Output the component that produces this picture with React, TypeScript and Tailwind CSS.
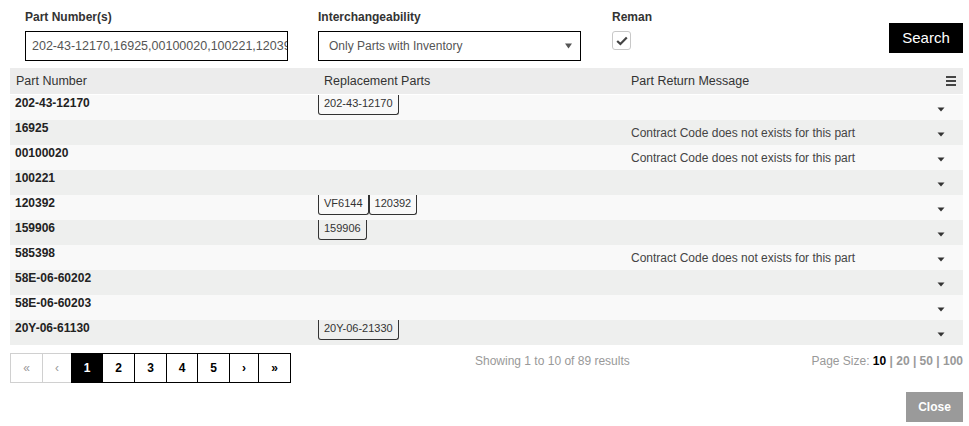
import React from "react";

type Row = { pn: string; reps: string[]; msg: string };

const MSG = "Contract Code does not exists for this part";

const rows: Row[] = [
  { pn: "202-43-12170", reps: ["202-43-12170"], msg: "" },
  { pn: "16925", reps: [], msg: MSG },
  { pn: "00100020", reps: [], msg: MSG },
  { pn: "100221", reps: [], msg: "" },
  { pn: "120392", reps: ["VF6144", "120392"], msg: "" },
  { pn: "159906", reps: ["159906"], msg: "" },
  { pn: "585398", reps: [], msg: MSG },
  { pn: "58E-06-60202", reps: [], msg: "" },
  { pn: "58E-06-60203", reps: [], msg: "" },
  { pn: "20Y-06-61130", reps: ["20Y-06-21330"], msg: "" },
];

function Caret() {
  return (
    <svg width="8" height="5" viewBox="0 0 8 5" className="block">
      <path d="M0.5 0.5 L7.5 0.5 L4 4.5 Z" fill="#333" />
    </svg>
  );
}

function PageBtn({
  label,
  w,
  active,
  disabled,
}: {
  label: string;
  w: string;
  active?: boolean;
  disabled?: boolean;
}) {
  const base =
    "h-[30px] flex items-center justify-center -ml-px first:ml-0 border text-[12px] leading-none";
  if (active)
    return (
      <div className={`${base} ${w} bg-black border-black text-white font-bold relative`}>
        {label}
      </div>
    );
  if (disabled)
    return (
      <div className={`${base} ${w} bg-white border-[#d0d0d0] text-[#999]`}>{label}</div>
    );
  return (
    <div className={`${base} ${w} bg-white border-black text-black font-bold`}>{label}</div>
  );
}

export default function App() {
  return (
    <div
      className="w-[969px] h-[426px] bg-white overflow-hidden text-[#333]"
      style={{ fontFamily: '"Liberation Sans", Arial, sans-serif' }}
    >
      <div className="ml-[10px] w-[953px]">
        {/* Top form */}
        <div className="flex h-[68px]">
          <div className="ml-[15px] w-[263px] pt-[10px]">
            <div className="text-[12px] font-bold leading-[14px] text-[#333]">Part Number(s)</div>
            <div className="mt-[7px] h-[30px] border border-black flex items-center pl-[6px] overflow-hidden whitespace-nowrap text-[12.5px] text-[#555]">
              <span className="block w-[256px] overflow-hidden">202-43-12170,16925,00100020,100221,120392</span>
            </div>
          </div>
          <div className="ml-[30px] w-[263px] pt-[10px]">
            <div className="text-[12px] font-bold leading-[14px] text-[#333]">Interchangeability</div>
            <div className="mt-[7px] h-[30px] border border-black flex items-center justify-between pl-[10px] pr-[8px] text-[12px] text-[#555]">
              <span>Only Parts with Inventory</span>
              <svg width="7" height="6" viewBox="0 0 7 6">
                <path d="M0 0.5 L7 0.5 L3.5 5.5 Z" fill="#555" />
              </svg>
            </div>
          </div>
          <div className="ml-[31px] pt-[10px]">
            <div className="text-[12px] font-bold leading-[14px] text-[#333]">Reman</div>
            <div className="mt-[7px] w-[19px] h-[19px] border border-[#c8c8c8] rounded-[3px] flex items-center justify-center bg-white">
              <svg width="12" height="10" viewBox="0 0 12 10">
                <path d="M1.2 5 L4.4 8 L10.8 1.5" fill="none" stroke="#444" strokeWidth="2.2" />
              </svg>
            </div>
          </div>
          <div className="ml-auto pt-[23px]">
            <div className="w-[74px] h-[30px] bg-black text-white text-[15px] flex items-center justify-center pt-px">
              Search
            </div>
          </div>
        </div>

        {/* Table header */}
        <div className="grid grid-cols-[308px_307px_1fr_40px] h-[26px] bg-[#ececec] items-center text-[12.5px] text-[#333]">
          <div className="pl-[6px]">Part Number</div>
          <div className="pl-[6px]">Replacement Parts</div>
          <div className="pl-[6px]">Part Return Message</div>
          <div className="flex justify-end pr-[7px]">
            <div className="flex flex-col gap-[2px] w-[10px]">
              <div className="h-[2px] bg-[#444]" />
              <div className="h-[2px] bg-[#444]" />
              <div className="h-[2px] bg-[#444]" />
            </div>
          </div>
        </div>
        <div className="h-px bg-white" />

        {/* Rows */}
        {rows.map((r, i) => (
          <div
            key={i}
            className={`grid grid-cols-[308px_307px_1fr_40px] h-[25px] ${
              i % 2 === 0 ? "bg-[#f9f9f9]" : "bg-[#eeefee]"
            }`}
          >
            <div className="pl-[5px] text-[12px] font-bold leading-[16px] text-[#222]">{r.pn}</div>
            <div className="flex items-start">
              {r.reps.map((p, j) => (
                <div
                  key={j}
                  className="h-[20px] px-[5px] border-x border-b border-[#333] rounded-b-[3px] text-[11px] leading-[16px] text-[#333]"
                >
                  {p}
                </div>
              ))}
            </div>
            <div className="pl-[6px] flex items-center text-[12px] text-[#444]">{r.msg}</div>
            <div className="flex items-center justify-end pr-[18px] pt-[4px]">
              <Caret />
            </div>
          </div>
        ))}

        {/* Footer */}
        <div className="flex mt-[8px] items-start">
          <div className="flex">
            <PageBtn label="«" w="w-[33px]" disabled />
            <PageBtn label="‹" w="w-[30px]" disabled />
            <PageBtn label="1" w="w-[32px]" active />
            <PageBtn label="2" w="w-[33px]" />
            <PageBtn label="3" w="w-[33px]" />
            <PageBtn label="4" w="w-[32px]" />
            <PageBtn label="5" w="w-[33px]" />
            <PageBtn label="›" w="w-[30px]" />
            <PageBtn label="»" w="w-[33px]" />
          </div>
          <div className="ml-[184px] text-[12px] text-[#999] leading-[14px] pt-[1px]">
            Showing 1 to 10 of 89 results
          </div>
          <div className="ml-auto text-[12px] text-[#999] leading-[14px] pt-[1px]">
            Page Size: <span className="font-bold text-black">10</span>
            <span className="font-bold"> | 20 | 50 | 100</span>
          </div>
        </div>
        <div className="flex justify-end mt-[9px]">
          <div className="w-[57px] h-[30px] bg-[#9a9a9a] text-white text-[12px] font-bold flex items-center justify-center">
            Close
          </div>
        </div>
      </div>
    </div>
  );
}
